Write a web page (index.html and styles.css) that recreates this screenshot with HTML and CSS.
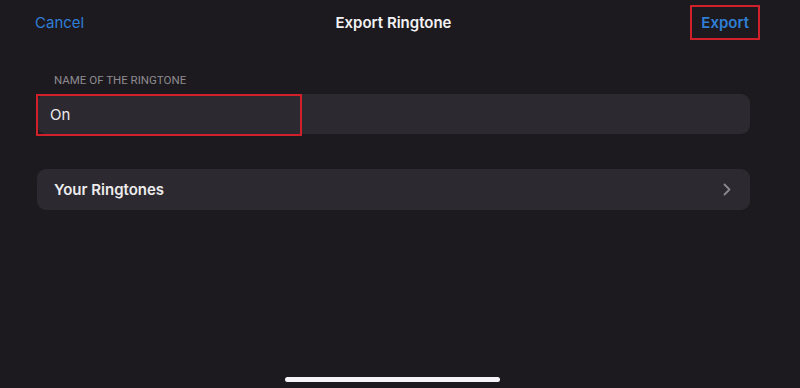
FILE: index.html
```html
<!DOCTYPE html>
<html>
<head>
    <link rel="stylesheet" href="styles.css">
</head>
<body>
    <div class="screen">
        <div class="nav">
            <span class="nav-btn cancel">Cancel</span>
            <span class="nav-title">Export Ringtone</span>
            <span class="nav-btn export"><span class="mark">Export</span></span>
        </div>
        <div class="section-label">NAME OF THE RINGTONE</div>
        <div class="field">
            <span class="field-text">On</span>
            <span class="highlight"></span>
        </div>
        <div class="row">
            <span class="row-text">Your Ringtones</span>
            <svg class="chevron" width="8" height="13" viewBox="0 0 8 13">
                <path d="M1.5 1.5 L6.5 6.5 L1.5 11.5" fill="none" stroke="#8a878e" stroke-width="1.8" stroke-linecap="round" stroke-linejoin="round"/>
            </svg>
        </div>
        <div class="home-bar"></div>
    </div>
</body>
</html>
```

FILE: styles.css
```css
body {
    margin: 0;
    background-color: #1d1a1f;
    font-family: Inter, "Noto Sans", sans-serif;
    color: #fff;
}
.screen {
    height: 388px;
    display: flex;
    flex-direction: column;
    padding: 0 50px 0 37px;
    box-sizing: border-box;
    overflow: hidden;
}
.nav {
    display: grid;
    grid-template-columns: 1fr auto 1fr;
    align-items: center;
    height: 44px;
    font-size: 15px;
}
.nav-btn {
    color: #2f7fd6;
}
.cancel {
    justify-self: start;
    margin-left: -2px;
}
.nav-title {
    font-weight: 600;
    color: #f2f2f4;
}
.export {
    justify-self: end;
    font-weight: 600;
}
.export .mark {
    display: inline-block;
    padding: 6px 9px;
    margin-right: -10px;
    border: 2px solid #d0202a;
}
.section-label {
    margin: 28px 0 0 17px;
    font-family: Roboto, sans-serif;
    font-size: 11.5px;
    letter-spacing: 0;
    color: #8d8b91;
    height: 22px;
    line-height: 16px;
}
.field {
    position: relative;
    height: 40px;
    border-radius: 9px;
    background-color: #2c2a30;
    display: flex;
    align-items: center;
    padding-left: 13px;
    font-size: 15px;
}
.field-text {
    color: #ececee;
}
.highlight {
    position: absolute;
    left: -1px;
    top: 0;
    width: 262px;
    height: 38px;
    border: 2px solid #d0202a;
}
.row {
    margin-top: 35px;
    height: 41px;
    border-radius: 9px;
    background-color: #2c2a30;
    display: flex;
    align-items: center;
    justify-content: space-between;
    padding: 0 19px 0 17px;
    font-size: 15px;
}
.row-text {
    font-weight: 600;
    color: #ececee;
}
.home-bar {
    margin: auto auto 6px;
    width: 215px;
    height: 5px;
    border-radius: 3px;
    background-color: #f6f4f7;
    position: relative;
    left: -1px;
}
```
